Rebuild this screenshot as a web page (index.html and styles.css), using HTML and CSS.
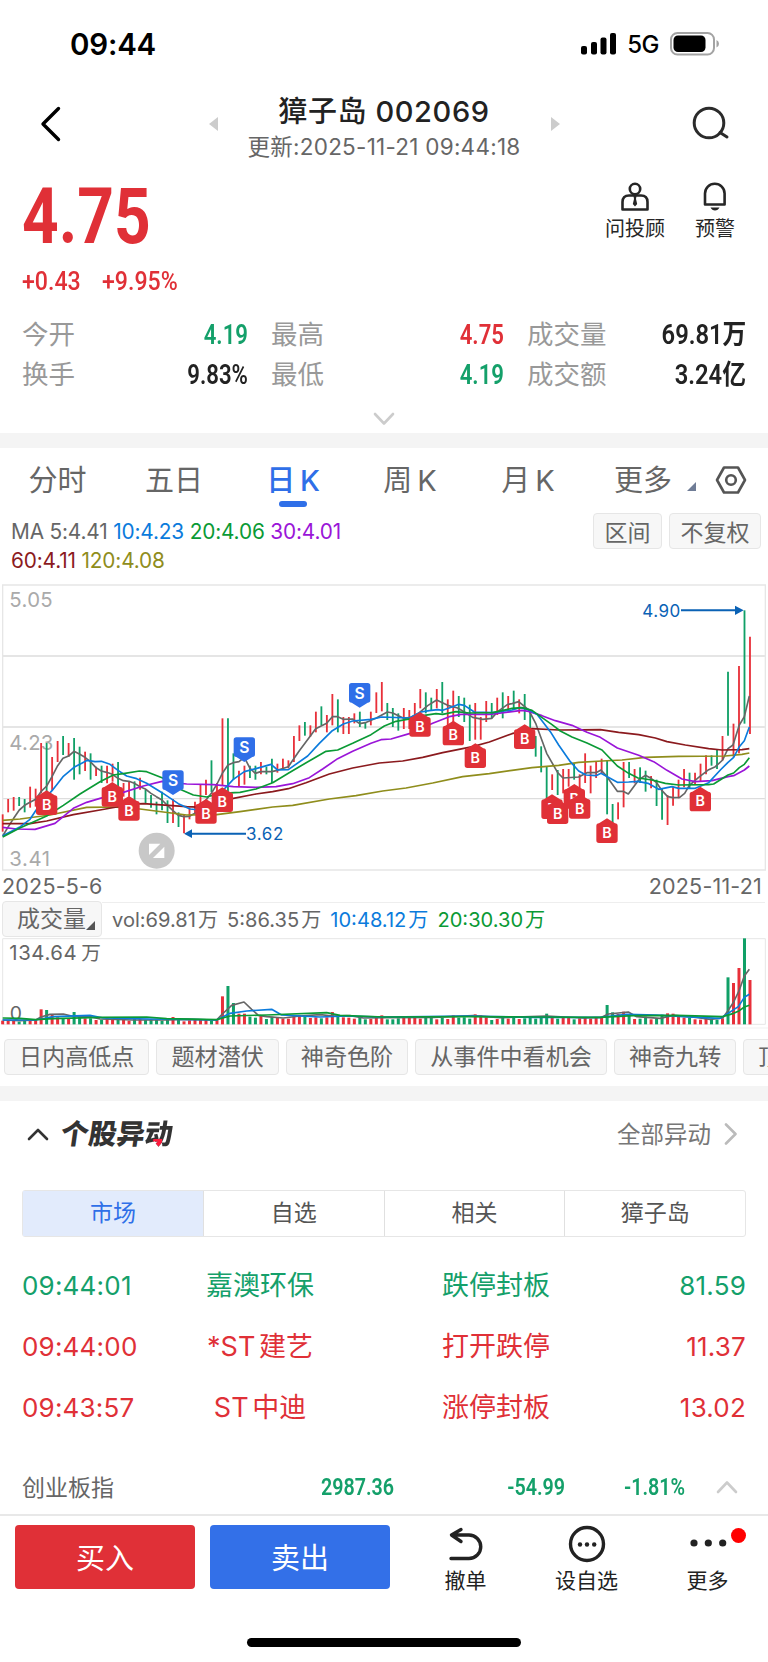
FILE: index.html
```html
<!DOCTYPE html>
<html lang="zh-CN">
<head>
    <meta charset="UTF-8">
    <meta name="viewport" content="width=device-width, initial-scale=1.0">
    <title>獐子岛 002069</title>
    <link rel="stylesheet" href="styles.css">
</head>
<body>
    <div class="status-bar">
        <span class="clock">09:44</span>
        <svg class="signal" width="36" height="22" viewBox="0 0 36 22">
            <rect x="0" y="13" width="6" height="8.5" rx="2"/>
            <rect x="10" y="9" width="6" height="12.5" rx="2"/>
            <rect x="19.5" y="4.5" width="6" height="17" rx="2"/>
            <rect x="29" y="0" width="6" height="21.5" rx="2"/>
        </svg>
        <span class="network">5G</span>
        <svg class="battery" width="50" height="24" viewBox="0 0 50 24">
            <rect x="1" y="1" width="43" height="21.5" rx="6.5" fill="none" stroke="#a3a3a3" stroke-width="2"/>
            <rect x="3.5" y="3.5" width="32" height="16.5" rx="4.5"/>
            <path d="M46.5 8v7.5q2.5-1 2.5-3.75t-2.5-3.75z" fill="#a3a3a3"/>
        </svg>
    </div>

    <div class="nav">
        <svg class="back" width="22" height="36" viewBox="0 0 22 36"><path d="M18.5 2.5L3 18l15.500 15.500"/></svg>
        <div class="nav-center">
            <svg width="9" height="14" viewBox="0 0 9 14"><path d="M9 0v14L0 7z" fill="#ccc"/></svg>
            <div class="nav-title">
                <h1>獐子岛 002069</h1>
                <p>更新:2025-11-21 09:44:18</p>
            </div>
            <svg width="9" height="14" viewBox="0 0 9 14"><path d="M0 0v14l9-7z" fill="#ccc"/></svg>
        </div>
        <svg class="search" width="38" height="36" viewBox="0 0 38 36"><circle cx="17" cy="17" r="14.800"/><path d="M28 26.500l7 4.500"/></svg>
    </div>

    <div class="quote">
        <div class="price">
            <div class="price-now"><span>4.75</span></div>
            <div class="price-diff"><span>+0.43</span><span>+9.95%</span></div>
        </div>
        <div class="shortcut">
            <svg width="30" height="30" viewBox="0 0 30 30">
                <circle cx="15" cy="8" r="5.200"/>
                <path d="M2.500 28.500V21q0-6.500 6.500-6.500h12q6.500 0 6.500 6.500v7.500z"/>
                <path d="M13.500 15h3l-.5 3 1.200 5-2.200 2.500-2.200-2.500 1.200-5z" fill="#262626" stroke="none"/>
            </svg>
            <span>问投顾</span>
        </div>
        <div class="shortcut">
            <svg width="30" height="30" viewBox="0 0 30 30">
                <path d="M5 23.500V12.500a9.800 9.800 0 0 1 19.600 0v11z"/>
                <path d="M10.500 26.500h9q-1.500 3-4.500 3t-4.500-3z" fill="#262626" stroke="none"/>
            </svg>
            <span>预警</span>
        </div>
    </div>

    <div class="stats">
        <div><label>今开</label><b class="green">4.19</b></div>
        <div><label>最高</label><b class="red">4.75</b></div>
        <div><label>成交量</label><b class="unit">69.81万</b></div>
        <div><label>换手</label><b>9.83%</b></div>
        <div><label>最低</label><b class="green">4.19</b></div>
        <div><label>成交额</label><b class="unit">3.24亿</b></div>
    </div>
    <div class="expand"><svg width="22" height="14" viewBox="0 0 22 14"><path d="M2 2l9 9.500L20 2"/></svg></div>

    <div class="band"></div>

    <div class="periods">
        <span>分时</span>
        <span>五日</span>
        <span class="active">日 K</span>
        <span>周 K</span>
        <span>月 K</span>
        <span class="more">更多<svg width="9" height="9" viewBox="0 0 9 9"><path d="M9 0v9H0z" fill="#6f7c96"/></svg></span>
        <svg class="gear" width="32" height="30" viewBox="0 0 32 30"><path d="M9 2.500h14L30 15l-7 12.500H9L2 15z"/><circle cx="16" cy="15" r="4.800"/></svg>
    </div>

    <div class="ma">
        <div class="ma-values">
            <span>MA 5:4.41</span> <span class="c10">10:4.23</span> <span class="c20">20:4.06</span> <span class="c30">30:4.01</span><br>
            <span class="c60">60:4.11</span> <span class="c120">120:4.08</span>
        </div>
        <button class="w70">区间</button>
        <button>不复权</button>
    </div>

    <!-- 3 svg units = 1px -->
    <svg id="kline" class="chart" width="768" height="288" viewBox="0 12 2304 864"></svg>

    <div class="dates"><span>2025-5-6</span><span>2025-11-21</span></div>

    <div class="vol-head">
        <button>成交量<svg width="9" height="9" viewBox="0 0 9 9"><path d="M9 0v9H0z" fill="#555"/></svg></button>
        <div class="vol-values">
            <span>vol:69.81<i>万</i></span><span>5:86.35<i>万</i></span><span class="c10">10:48.12<i>万</i></span><span class="c20">20:30.30<i>万</i></span>
        </div>
    </div>
    <svg id="volume" class="chart" width="768" height="91" viewBox="0 204 2304 273"></svg>

    <div class="chips">
        <span>日内高低点</span><span>题材潜伏</span><span>神奇色阶</span><span>从事件中看机会</span><span>神奇九转</span><span>顶底</span>
    </div>

    <div class="band"></div>

    <div class="section-head">
        <svg width="22" height="14" viewBox="0 0 22 14"><path d="M2 12l9-9 9 9" stroke="#333"/></svg>
        <h2>个股异<span>动</span></h2>
        <span class="all">全部异动</span>
        <svg width="14" height="22" viewBox="0 0 14 22"><path d="M2 1.500L11.500 11 2 20.500" stroke="#bbb"/></svg>
    </div>

    <div class="segments">
        <span class="active">市场</span><span>自选</span><span>相关</span><span>獐子岛</span>
    </div>

    <div class="moves">
        <div class="move green"><span>09:44:01</span><span>嘉澳环保</span><span>跌停封板</span><span>81.59</span></div>
        <div class="move red"><span>09:44:00</span><span>*ST 建艺</span><span>打开跌停</span><span>11.37</span></div>
        <div class="move red"><span>09:43:57</span><span>ST 中迪</span><span>涨停封板</span><span>13.02</span></div>
    </div>

    <div class="index-row">
        <label>创业板指</label>
        <b>2987.36</b>
        <b>-54.99</b>
        <b>-1.81%</b>
        <svg width="22" height="14" viewBox="0 0 22 14"><path d="M2 12l9-9.500L20 12"/></svg>
    </div>

    <div class="toolbar">
        <button class="buy">买入</button>
        <button class="sell">卖出</button>
        <div class="tool">
            <svg width="40" height="38" viewBox="0 0 40 38"><path d="M5.500 10H23a11.600 11.600 0 0 1 0 23.500H5M15 4.500L5.500 10l9.500 6.500"/></svg>
            <span>撤单</span>
        </div>
        <div class="tool">
            <svg width="40" height="38" viewBox="0 0 40 38"><circle cx="20" cy="19" r="16.500"/><g fill="#222" stroke="none"><circle cx="13" cy="19.500" r="2.200"/><circle cx="20" cy="19.500" r="2.200"/><circle cx="27.200" cy="19.500" r="2.200"/></g></svg>
            <span>设自选</span>
        </div>
        <div class="tool">
            <svg width="40" height="38" viewBox="0 0 40 38"><g fill="#222" stroke="none"><circle cx="6" cy="18" r="3.600"/><circle cx="20.300" cy="18" r="3.600"/><circle cx="34.700" cy="18" r="3.600"/></g></svg>
            <span>更多</span>
            <em class="dot"></em>
        </div>
    </div>
    <div class="home-bar"></div>

    <script src="chart.js"></script>
</body>
</html>
```
FILE: styles.css
```css
* {
    box-sizing: border-box;
}
body {
    margin: 0;
    width: 768px;
    height: 1662px;
    overflow: hidden;
    background: #fff;
    color: #222;
    font-family: Inter, "Noto Sans CJK SC", sans-serif;
}
h1, h2, p {
    margin: 0;
}
svg {
    display: block;
    flex-shrink: 0;
}
button {
    font-family: inherit;
    padding: 0;
}
b, i, em {
    font-style: normal;
}
.red { color: #e03037; }
.green { color: #14a06a; }
.c10 { color: #0b7bdc; }
.c20 { color: #0a9a35; }
.c30 { color: #9a15d8; }
.c60 { color: #8b1a1e; }
.c120 { color: #8f8d1c; }

.status-bar {
    display: flex;
    align-items: center;
    height: 88px;
    padding: 0 48px 0 70px;
    color: #000;
}
.clock {
    font-size: 29.500px;
    font-weight: 600;
    margin-right: auto;
    letter-spacing: -0.2px;
}
.network {
    font-size: 24px;
    font-weight: 500;
    margin: 1px 11px 0 10px;
    letter-spacing: -0.5px;
}

.nav {
    display: flex;
    align-items: center;
    justify-content: space-between;
    height: 80px;
    padding: 0 38px 0 40px;
}
.back, .search {
    fill: none;
    stroke: #000;
    stroke-width: 3.4;
    stroke-linecap: round;
    stroke-linejoin: round;
    margin-top: -9px;
}
.search {
    stroke: #2b2b2b;
    stroke-width: 3;
}
.nav-center {
    display: flex;
    align-items: center;
    justify-content: space-between;
    width: 351px;
    margin-left: 14px;
}
.nav-center > svg {
    margin-top: -9px;
}
.nav-title {
    text-align: center;
    white-space: nowrap;
}
.nav-title h1 {
    font-size: 29px;
    line-height: 38px;
    font-weight: 500;
    letter-spacing: 0.6px;
}
.nav-title p {
    font-size: 22.500px;
    line-height: 32px;
    letter-spacing: 0.25px;
    color: #666;
}

.quote {
    display: flex;
    height: 148px;
    padding: 12px 13px 0 22px;
}
.price {
    flex: 1;
    color: #e03037;
    font-family: Roboto, sans-serif;
}
.price-now {
    font-size: 78px;
    line-height: 74px;
    font-weight: 700;
}
.price-now span, .price-diff span {
    display: inline-block;
    transform: scaleX(0.82);
    transform-origin: left;
}
.price-diff {
    font-size: 26px;
    line-height: 30px;
    font-weight: 500;
    margin-top: 12px;
}
.price-diff span {
    transform: scaleX(0.89);
}
.price-diff span + span {
    margin-left: 14px;
}
.shortcut {
    display: flex;
    flex-direction: column;
    align-items: center;
    width: 80px;
    font-size: 20px;
    line-height: 28px;
    color: #262626;
}
.shortcut svg {
    fill: none;
    stroke: #262626;
    stroke-width: 2.6;
    stroke-linejoin: round;
    margin: 1px 0 4px;
}

.stats {
    display: grid;
    grid-template-columns: 226px 233px 219px;
    grid-auto-rows: 40px;
    column-gap: 23px;
    padding-left: 22px;
}
.stats div {
    display: flex;
    justify-content: space-between;
    height: 40px;
    line-height: 36px;
}
.stats label {
    font-size: 26.5px;
    color: #999;
}
.stats b, .index-row b {
    font-family: Roboto, "Noto Sans CJK SC", sans-serif;
    font-size: 27px;
    font-weight: 600;
    transform: scaleX(0.82);
    transform-origin: right;
}
.stats b {
    line-height: 39px;
}
.stats .unit {
    transform: scaleX(0.88);
}
.expand {
    height: 37px;
    padding: 16px 373px 0;
}
.expand svg, .index-row svg, .section-head svg {
    fill: none;
    stroke: #ccc;
    stroke-width: 2.6;
    stroke-linecap: round;
    stroke-linejoin: round;
}
.band {
    height: 15px;
    background: #f4f4f4;
}

.periods {
    display: flex;
    align-items: center;
    height: 62px;
    padding: 0 21px 2px 0;
    font-size: 29px;
    color: #666;
}
.periods > span {
    position: relative;
    width: 118px;
    text-align: center;
    white-space: nowrap;
    word-spacing: -3px;
}
.periods > span:first-child {
    width: 115px;
}
.periods .active {
    color: #2f6fe8;
    font-weight: 500;
    left: 1px;
}
.periods .active::after {
    content: "";
    position: absolute;
    left: 45px;
    bottom: -8px;
    width: 28px;
    height: 6px;
    border-radius: 3px;
    background: #2f6fe8;
}
.periods .more {
    display: flex;
    align-items: flex-end;
    justify-content: flex-end;
    width: 109px;
}
.more svg {
    margin: 0 0 8px 15px;
}
.gear {
    fill: none;
    stroke: #555;
    stroke-width: 2.6;
    stroke-linejoin: round;
    margin: 3px 0 0 auto;
}

.ma {
    display: flex;
    height: 74px;
    padding: 3px 7px 0 11px;
}
.ma-values {
    flex: 1;
    padding-top: 5px;
    font-size: 20.800px;
    line-height: 28.500px;
    letter-spacing: -0.15px;
    color: #666;
}
.ma button, .vol-head button, .chips span {
    height: 36px;
    background: #f7f7f7;
    border: 1px solid #e6e6e6;
    border-radius: 4px;
    color: #666;
    font-size: 23px;
}
.ma button {
    width: 92px;
    margin-left: 7px;
    padding-bottom: 2px;
}
.ma .w70 {
    width: 69px;
}

.chart text {
    font-family: Inter, "Noto Sans CJK SC", sans-serif;
}
.dates {
    display: flex;
    justify-content: space-between;
    height: 29px;
    padding: 0 6px 0 2px;
    font-size: 21.500px;
    line-height: 28px;
    letter-spacing: 0.2px;
    color: #666;
}
.vol-head {
    display: flex;
    height: 37px;
    padding-left: 2px;
}
.vol-head button {
    display: flex;
    align-items: flex-end;
    justify-content: flex-end;
    width: 100px;
    padding-right: 6px;
    line-height: 34px;
}
.vol-head button svg {
    margin-bottom: 6px;
}
.vol-values {
    display: flex;
    gap: 9px;
    flex: 1;
    margin: 1px 3px 0 0;
    padding-left: 10px;
    border-top: 1px solid #eee;
    font-size: 20.100px;
    line-height: 34px;
    color: #666;
}
.vol-values i {
    margin-left: 2px;
}
.chips {
    display: flex;
    gap: 7px;
    height: 57px;
    padding: 10px 0 0 4px;
    overflow: hidden;
}
.chips span {
    flex-shrink: 0;
    padding: 0 14px;
    line-height: 34px;
    font-size: 23.100px;
}

.section-head {
    display: flex;
    align-items: center;
    height: 89px;
    padding: 0 30px 23px 27px;
}
.section-head h2 {
    flex: 1;
    margin-left: 12px;
    font-size: 28px;
    line-height: 40px;
    font-weight: 900;
    color: #333;
    transform: skewX(-8deg);
}
.section-head h2 span {
    background: linear-gradient(#ff1a3c, #ff1a3c) no-repeat 9px 22px / 9px 16px, #333;
    -webkit-background-clip: text;
    background-clip: text;
    color: transparent;
}
.all {
    font-size: 23.500px;
    color: #777;
    margin: -2px 13px 0 0;
}
.segments {
    display: flex;
    height: 47px;
    margin: 0 22px;
    border: 1px solid #e6e6e6;
    border-radius: 3px;
    font-size: 23px;
    line-height: 45px;
    color: #555;
}
.segments span {
    flex: 1;
    text-align: center;
}
.segments span + span {
    border-left: 1px solid #e0e0e0;
}
.segments .active {
    flex: 0 0 180px;
    background: #e2ebfc;
    color: #2f6fe8;
}

.moves {
    padding: 18px 22px 0;
    font-size: 27px;
}
.move {
    display: grid;
    grid-template-columns: 155px 166px 306px 97px;
    height: 61px;
    line-height: 61px;
    word-spacing: -4px;
}
.move span:nth-child(1), .move span:nth-child(4) {
    font-size: 26px;
    letter-spacing: 0.2px;
}
.move span:nth-child(2), .move span:nth-child(3) {
    text-align: center;
}
.move span:nth-child(4) {
    text-align: right;
}

.index-row {
    display: grid;
    grid-template-columns: 180px 192px 171px 120px 53px;
    align-items: center;
    height: 78px;
    padding: 22px 0 0 22px;
    border-bottom: 2px solid #e8e8e8;
}
.index-row label {
    font-size: 23px;
    color: #666;
    margin-top: -2px;
}
.index-row b {
    font-size: 24px;
    text-align: right;
    color: #14a06a;
}
.index-row svg {
    justify-self: end;
}

.toolbar {
    display: flex;
    height: 84px;
    padding: 9px 0 0 15px;
}
.toolbar button {
    width: 180px;
    height: 64px;
    margin-right: 15px;
    padding-bottom: 2px;
    border: none;
    border-radius: 4px;
    color: #fff;
    font-size: 29px;
}
.buy { background: #e03037; }
.sell { background: #3370e8; }
.tool {
    position: relative;
    display: flex;
    flex-direction: column;
    align-items: center;
    width: 121px;
    font-size: 21px;
    line-height: 36px;
    color: #222;
}
.tool svg {
    fill: none;
    stroke: #222;
    stroke-width: 3.4;
    stroke-linecap: round;
    stroke-linejoin: round;
}
.dot {
    position: absolute;
    left: 84px;
    top: 3px;
    width: 15px;
    height: 15px;
    border-radius: 50%;
    background: #f00;
}
.home-bar {
    width: 274px;
    height: 9px;
    margin: 38px auto 0;
    border-radius: 5px;
    background: #000;
}
```
FILE: chart.js
```js
const RED = '#e8303a';
const GREEN = '#10a067';
const STEP = 16.485;
const xAt = i => 8 + i * STEP;

// direction, high, low
const candles = `r703-755 r657-697 r651-692 g651-678 g657-697 r620-683 r626-680 r489-640 g489-640 r531-630
r483-546 g468-525 r489-530 g474-599 g500-583 r515-573 g520-599 r560-588 g557-609 r557-610
r551-605 g546-640 r609-650 r605-650 g604-660 r593-629 g630-671 g645-683 g665-703 g635-691
g661-729 r657-729 g697-741 r705-760 r683-718 r665-700 r614-680 r599-645 g541-636 r609-660
r415-615 g415-640 g520-599 r572-620 r557-614 g557-594 g557-599 r546-583 g560-583 g536-609
r551-578 r536-565 r541-565 r468-546 r436-483 g426-467 r436-470 r395-457 g379-436 r405-457
r342-436 g358-457 r411-462 r411-462 r400-430 g395-441 g426-446 r395-436 r337-399 r306-394
g369-420 g384-441 g400-452 r384-447 r390-447 r369-410 r327-385 g337-400 g353-392 r327-385
g306-400 r358-440 r332-430 g348-411 g353-426 g374-483 r369-479 r411-479 r363-426 g369-415
r353-405 g337-415 r348-395 g332-390 r358-400 g342-420 g395-446 g468-530 g499-577 g560-655
r583-630 g570-645 r567-640 r567-620 g551-599 r583-640 r520-609 r557-640 r546-594 r536-580
g541-703 g672-735 r667-718 r546-682 g546-594 r567-610 g562-609 g572-635 r588-625 g599-678
g625-719 r645-735 r620-677 r599-655 r567-622 g578-625 r578-615 r551-605 r526-583 g526-557
g510-567 r468-541 g275-467 r431-530 r258-520 g91-431 r170-462`.split(/\s+/);

const volumes = [452, 450, 450, 455, 452, 450, 448, 418, 420, 435, 442, 445, 445, 426, 435, 445, 445, 450, 450, 445,
    448, 447, 450, 452, 446, 447, 450, 448, 450, 452, 449, 441, 450, 454, 451, 450, 450, 448, 452, 448,
    379, 348, 399, 431, 431, 440, 443, 438, 447, 440, 443, 446, 446, 440, 435, 435, 444, 442, 445, 442,
    426, 438, 442, 443, 446, 440, 448, 447, 442, 436, 448, 448, 445, 444, 444, 442, 446, 438, 440, 448,
    444, 447, 436, 443, 442, 446, 433, 436, 442, 450, 447, 440, 446, 443, 447, 445, 438, 446, 444, 431,
    442, 446, 441, 443, 448, 445, 444, 446, 442, 444, 405, 427, 432, 425, 434, 447, 446, 440, 448, 445,
    434, 430, 431, 440, 443, 443, 448, 449, 446, 447, 449, 445, 322, 339, 294, 205, 330];

const lines = {
    '#666': '8,768 25,740 41,715 58,690 74,676 90,667 107,658 123,635 140,618 156,590 173,557 189,535 206,528 222,514 238,522 255,532 271,545 288,563 304,573 320,577 337,583 354,595 370,602 387,604 403,610 420,620 436,627 453,640 469,650 486,660 502,676 519,692 535,706 552,710 568,709 585,700 601,685 618,660 634,640 651,612 667,580 684,555 700,548 717,545 733,532 750,565 766,580 782,575 815,575 832,571 865,560 898,512 931,468 947,446 980,430 997,410 1013,410 1030,418 1058,417 1079,431 1096,428 1129,414 1162,396 1178,399 1211,415 1233,412 1258,398 1283,377 1310,360 1343,376 1373,384 1393,396 1418,412 1448,418 1475,415 1493,395 1523,373 1536,371 1556,365 1586,390 1607,430 1640,520 1673,578 1689,594 1736,591 1761,578 1788,578 1803,570 1821,590 1852,634 1869,634 1885,642 1916,600 1936,586 1953,595 1970,608 1986,632 2003,650 2019,653 2039,652 2054,640 2068,616 2096,592 2126,569 2146,560 2168,540 2184,506 2199,495 2218,435 2233,410 2248,348',
    '#8f8d1c': '8,721 60,717 150,705 260,682 340,681 420,687 560,705 650,704 720,695 768,688 818,681 878,676 988,657 1068,647 1148,633 1218,624 1298,609 1388,590 1468,581 1536,571 1596,563 1676,556 1736,547 1806,543 1866,540 1936,532 2036,529 2176,528 2226,523 2248,519',
    '#8b1a1e': '8,731 90,731 140,723 220,704 300,690 400,672 430,671 560,680 610,682 650,670 700,655 768,642 818,635 865,626 918,608 988,582 1058,564 1138,549 1208,543 1268,532 1328,518 1418,500 1468,486 1536,461 1596,446 1676,450 1801,449 1856,457 1916,464 1966,474 2001,485 2056,495 2126,506 2166,510 2226,509 2248,506',
    '#9a15d8': '8,742 50,747 105,748 165,730 220,685 260,667 300,655 370,637 430,618 486,604 560,612 640,614 700,620 768,622 828,620 878,611 928,593 968,567 1013,536 1058,514 1113,490 1143,479 1173,477 1228,461 1298,430 1348,410 1383,403 1468,403 1536,395 1566,391 1586,394 1626,407 1666,422 1716,436 1761,457 1801,472 1852,504 1916,526 1961,545 2001,571 2046,597 2086,605 2136,602 2184,590 2201,587 2233,570 2248,558',
    '#0b7bdc': '8,767 58,742 90,718 123,668 156,632 189,590 222,562 262,541 285,545 304,544 330,553 354,571 380,588 410,596 440,610 486,638 535,671 570,687 600,690 640,670 670,630 700,598 733,575 768,566 813,553 833,570 865,569 923,528 958,490 997,452 1030,432 1058,423 1113,418 1145,411 1228,414 1263,396 1288,392 1313,389 1328,391 1358,380 1376,373 1393,376 1423,396 1478,398 1536,390 1561,383 1586,389 1611,403 1651,455 1676,495 1711,545 1736,573 1758,585 1788,587 1803,580 1852,607 1886,606 1914,604 1944,610 1976,628 2016,620 2036,625 2086,625 2126,608 2161,570 2184,547 2201,532 2218,500 2233,482 2248,441',
    '#0a9a35': '8,771 58,745 140,708 190,676 240,642 300,605 340,585 375,580 418,573 440,575 486,593 540,628 580,645 620,651 660,640 720,637 768,627 818,608 865,580 898,560 938,537 978,514 1013,510 1058,490 1113,464 1153,438 1188,424 1238,415 1268,407 1308,401 1328,403 1368,395 1408,399 1478,398 1536,385 1566,383 1596,391 1621,409 1656,434 1681,453 1716,471 1761,489 1806,510 1852,558 1886,580 1914,594 1956,600 1996,610 2036,615 2126,614 2141,612 2184,585 2201,579 2218,563 2233,553 2248,533'
};

const volLines = {
    '#666': '8,450 60,452 107,450 123,441 150,433 190,432 215,438 270,440 300,447 400,450 500,450 560,448 650,450 667,432 695,406 732,396 755,418 775,436 800,440 850,444 900,438 960,434 1000,438 1050,437 1090,444 1152,443 1300,442 1420,437 1500,443 1640,438 1750,444 1805,442 1825,432 1885,426 1910,440 1980,445 2020,436 2090,442 2130,448 2168,444 2184,422 2201,396 2218,360 2233,318 2248,298',
    '#0b7bdc': '8,450 107,450 160,440 270,436 310,444 450,447 560,448 650,450 690,430 740,423 815,418 845,435 960,441 1040,438 1152,441 1400,438 1600,442 1800,442 1880,433 1970,435 2050,440 2160,445 2184,430 2215,410 2233,382 2248,373',
    '#0a9a35': '8,444 60,445 107,449 160,446 300,442 440,441 500,446 650,449 690,438 800,435 980,428 1020,436 1152,441 1400,440 1600,441 1800,442 1900,437 2030,436 2168,440 2201,430 2218,422 2233,411 2248,406'
};

// tip of each buy marker, top of each sell marker
const buys = [[140, 631], [337, 606], [387, 648], [618, 657], [667, 622], [1260, 396], [1360, 422], [1426, 490],
    [1574, 433], [1656, 643], [1673, 658], [1723, 612], [1739, 642], [1821, 715], [2101, 620]];
const sells = [[519, 571], [733, 472], [1079, 309]];

function label(text, x, y, width, color, size = 61) {
    return `<text x="${x}" y="${y}" fill="${color}" font-size="${size}" textLength="${width}">${text}</text>`;
}

function polylines(set) {
    return Object.entries(set).map(([color, points]) =>
        `<polyline points="${points}" fill="none" stroke="${color}" stroke-width="5" stroke-linejoin="round"/>`).join('');
}

function drawKline() {
    let out = '<g stroke="#ddd" stroke-width="4"><path d="M8 228H2296M8 441H2296M8 656H2296"/><path d="M8 15H2296V870H8z" fill="none" stroke="#e6e6e6"/></g>';
    out += label('5.05', 28, 80, 130, '#aaa') + label('4.23', 28, 509, 132, '#aaa') + label('3.41', 28, 859, 122, '#aaa');
    candles.forEach((c, i) => {
        const [high, low] = c.slice(1).split('-');
        out += `<path d="M${xAt(i)} ${high}V${low}" stroke="${c[0] === 'r' ? RED : GREEN}" stroke-width="5.500"/>`;
    });
    out += polylines(lines);
    out += '<g fill="#0a62b5" stroke="#0a62b5"><path d="M570 761H738M2043 91H2210" stroke-width="6"/><path d="M552 761l24-13v26zM2231 91l-26-14v28z" stroke="none"/></g>';
    out += label('3.62', 738, 781, 112, '#0a62b5', 51) + label('4.90', 1927, 110, 114, '#0a62b5', 51);
    out += '<circle cx="470" cy="812" r="54" fill="#c8c8c8"/><path d="M447 791h34l-34 34zM493 800v34h-34z" fill="#fff"/>';
    buys.forEach(([x, y]) => {
        out += `<path d="M${x} ${y}l24 15q8 0 8 8v43q0 8-8 8h-48q-8 0-8-8v-43q0-8 8-8z" fill="#e03037"/>
            <text x="${x}" y="${y + 59}" fill="#fff" font-size="43" font-weight="600" text-anchor="middle">B</text>`;
    });
    sells.forEach(([x, y]) => {
        out += `<path d="M${x - 24} ${y}h48q8 0 8 8v43q0 8-8 8l-24 15-24-15q-8 0-8-8v-43q0-8 8-8z" fill="#2f6fe8"/>
            <text x="${x}" y="${y + 47}" fill="#fff" font-size="47" font-weight="600" text-anchor="middle">S</text>`;
    });
    document.getElementById('kline').innerHTML = out;
}

function drawVolume() {
    let out = '<path d="M8 206H2296V463H8z" fill="none" stroke="#e6e6e6" stroke-width="3"/><path d="M108 474H2304" stroke="#f1f1f1" stroke-width="3"/>';
    volumes.forEach((top, i) => {
        out += `<rect x="${xAt(i) - 4.5}" y="${top}" width="9" height="${463 - top}" fill="${candles[i][0] === 'r' ? RED : GREEN}"/>`;
    });
    out += label('134.64', 28, 270, 202, '#666') + label('万', 244, 270, 58, '#666', 59) + label('0', 29, 450, 34, '#666', 58);
    out += polylines(volLines);
    document.getElementById('volume').innerHTML = out;
}

drawKline();
drawVolume();
```
